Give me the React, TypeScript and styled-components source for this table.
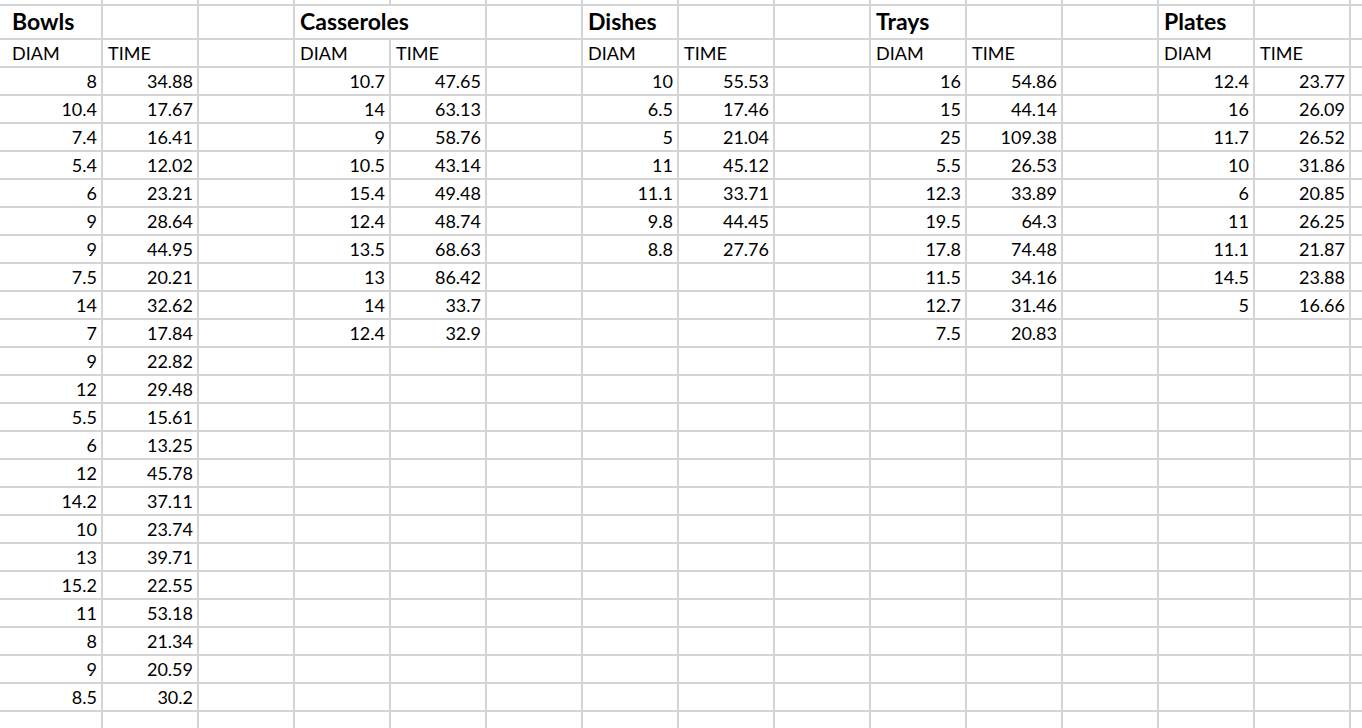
import * as React from "react";
import styled, { createGlobalStyle } from "styled-components";

const GlobalStyle = createGlobalStyle`
  html, body {
    margin: 0;
    padding: 0;
    background: #ffffff;
    overflow: hidden;
  }
  body {
    font-family: "Lato", "Liberation Sans", sans-serif;
  }
`;

type Group = {
  title: string;
  wide?: boolean;
  rows: [string, string][];
};

const groups: Group[] = [
  {
    title: "Bowls",
    rows: [
      ["8", "34.88"], ["10.4", "17.67"], ["7.4", "16.41"], ["5.4", "12.02"],
      ["6", "23.21"], ["9", "28.64"], ["9", "44.95"], ["7.5", "20.21"],
      ["14", "32.62"], ["7", "17.84"], ["9", "22.82"], ["12", "29.48"],
      ["5.5", "15.61"], ["6", "13.25"], ["12", "45.78"], ["14.2", "37.11"],
      ["10", "23.74"], ["13", "39.71"], ["15.2", "22.55"], ["11", "53.18"],
      ["8", "21.34"], ["9", "20.59"], ["8.5", "30.2"],
    ],
  },
  {
    title: "Casseroles",
    wide: true,
    rows: [
      ["10.7", "47.65"], ["14", "63.13"], ["9", "58.76"], ["10.5", "43.14"],
      ["15.4", "49.48"], ["12.4", "48.74"], ["13.5", "68.63"], ["13", "86.42"],
      ["14", "33.7"], ["12.4", "32.9"],
    ],
  },
  {
    title: "Dishes",
    rows: [
      ["10", "55.53"], ["6.5", "17.46"], ["5", "21.04"], ["11", "45.12"],
      ["11.1", "33.71"], ["9.8", "44.45"], ["8.8", "27.76"],
    ],
  },
  {
    title: "Trays",
    rows: [
      ["16", "54.86"], ["15", "44.14"], ["25", "109.38"], ["5.5", "26.53"],
      ["12.3", "33.89"], ["19.5", "64.3"], ["17.8", "74.48"], ["11.5", "34.16"],
      ["12.7", "31.46"], ["7.5", "20.83"],
    ],
  },
  {
    title: "Plates",
    rows: [
      ["12.4", "23.77"], ["16", "26.09"], ["11.7", "26.52"], ["10", "31.86"],
      ["6", "20.85"], ["11", "26.25"], ["11.1", "21.87"], ["14.5", "23.88"],
      ["5", "16.66"],
    ],
  },
];

const COLS = 15;
const DATA_ROWS = 24;

// the visible window onto the sheet, which runs on past its edges
const Viewport = styled.div`
  width: 1362px;
  height: 728px;
  overflow: hidden;
`;

const Sheet = styled.div`
  display: grid;
  grid-template-columns: 5px repeat(${COLS}, 94px);
  grid-template-rows: 4px 32px repeat(${DATA_ROWS + 1}, 26px);
  gap: 2px;
  width: max-content;
  background: #d4d4d4;
  color: #000000;
`;

const Cell = styled.div<{ $align?: "left" | "right"; $span?: number }>`
  background: #ffffff;
  font-size: 18px;
  line-height: 26px;
  padding: 0 4px 0 5px;
  text-align: ${p => p.$align ?? "left"};
  white-space: nowrap;
  overflow: hidden;
  grid-column: span ${p => p.$span ?? 1};
`;

const TitleCell = styled(Cell)`
  font-weight: 700;
  font-size: 23px;
  line-height: 30px;
  overflow: visible;
`;

const App = (): JSX.Element => {
  const cells: JSX.Element[] = [];
  let k = 0;

  // strip of the row above, cut off by the window
  for (let c = 0; c <= COLS; c++) cells.push(<Cell key={k++} />);

  // titles
  cells.push(<Cell key={k++} />);
  let col = 0;
  groups.forEach(g => {
    const span = g.wide ? 2 : 1;
    cells.push(<TitleCell key={k++} $span={span}>{g.title}</TitleCell>);
    const rest = 3 - span;
    for (let i = 0; i < rest; i++) cells.push(<Cell key={k++} />);
    col += 3;
  });
  for (; col < COLS; col++) cells.push(<Cell key={k++} />);

  // headers
  cells.push(<Cell key={k++} />);
  col = 0;
  groups.forEach(() => {
    cells.push(<Cell key={k++}>DIAM</Cell>);
    cells.push(<Cell key={k++}>TIME</Cell>);
    cells.push(<Cell key={k++} />);
    col += 3;
  });
  for (; col < COLS; col++) cells.push(<Cell key={k++} />);

  // values
  for (let r = 0; r < DATA_ROWS; r++) {
    cells.push(<Cell key={k++} />);
    col = 0;
    groups.forEach(g => {
      const row = g.rows[r];
      cells.push(<Cell key={k++} $align="right">{row ? row[0] : ""}</Cell>);
      cells.push(<Cell key={k++} $align="right">{row ? row[1] : ""}</Cell>);
      cells.push(<Cell key={k++} />);
      col += 3;
    });
    for (; col < COLS; col++) cells.push(<Cell key={k++} />);
  }

  return (
    <>
      <GlobalStyle />
      <Viewport>
        <Sheet>{cells}</Sheet>
      </Viewport>
    </>
  );
};

export default App;
